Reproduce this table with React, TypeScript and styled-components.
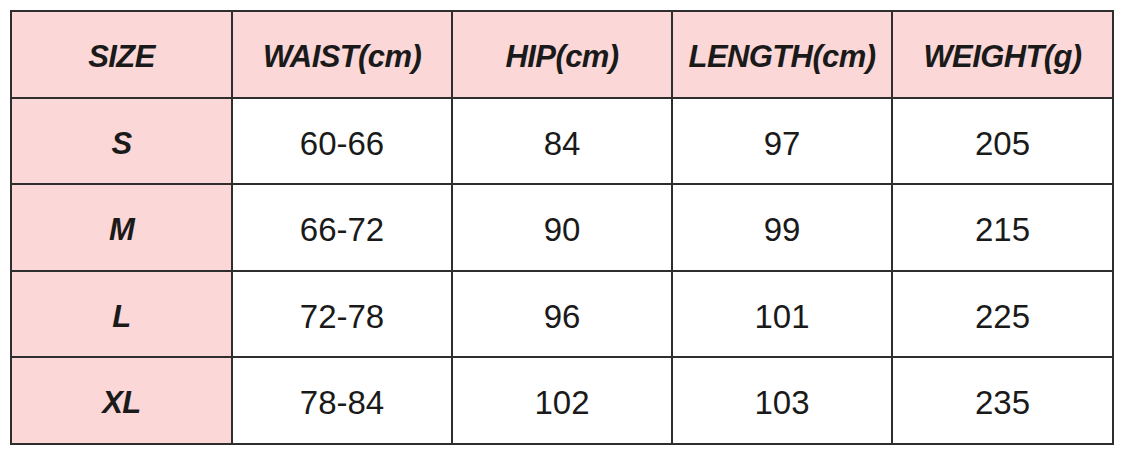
import React from 'react';
import styled, { createGlobalStyle } from 'styled-components';

const GlobalStyle = createGlobalStyle`
  body {
    margin: 0;
    background: #fff;
    font-family: "Liberation Sans", Arial, sans-serif;
  }
`;

const Wrapper = styled.div`
  padding: 10px 0 0 10px;
`;

const Table = styled.table`
  border-collapse: collapse;
  table-layout: fixed;
  width: 1102px;
  color: #1a1a1a;
`;

const Col = styled.col<{ $w: number }>`
  width: ${(p) => p.$w}px;
`;

const Row = styled.tr`
  height: 86.5px;
`;

const Cell = styled.td<{ $head?: boolean }>`
  border: 2px solid #2e2e2e;
  padding: 6px 0 0;
  text-align: center;
  vertical-align: middle;
  white-space: nowrap;
  background: ${(p) => (p.$head ? '#fbd7d7' : '#fff')};
  font-size: ${(p) => (p.$head ? '31px' : '33px')};
  font-weight: ${(p) => (p.$head ? 700 : 400)};
  font-style: ${(p) => (p.$head ? 'italic' : 'normal')};
  letter-spacing: ${(p) => (p.$head ? '-0.6px' : '0')};
`;

const widths = [221, 220, 220, 220, 221];

const headers = ['SIZE', 'WAIST(cm)', 'HIP(cm)', 'LENGTH(cm)', 'WEIGHT(g)'];

const rows = [
  ['S', '60-66', '84', '97', '205'],
  ['M', '66-72', '90', '99', '215'],
  ['L', '72-78', '96', '101', '225'],
  ['XL', '78-84', '102', '103', '235'],
];

const App = () => {
  return (
    <Wrapper>
      <GlobalStyle />
      <Table>
        <colgroup>
          {widths.map((w, i) => (
            <Col key={i} $w={w} />
          ))}
        </colgroup>
        <tbody>
          <Row>
            {headers.map((h) => (
              <Cell key={h} $head>{h}</Cell>
            ))}
          </Row>
          {rows.map((r) => (
            <Row key={r[0]}>
              {r.map((v, i) => (
                <Cell key={i} $head={i === 0}>{v}</Cell>
              ))}
            </Row>
          ))}
        </tbody>
      </Table>
    </Wrapper>
  );
};

export default App;
